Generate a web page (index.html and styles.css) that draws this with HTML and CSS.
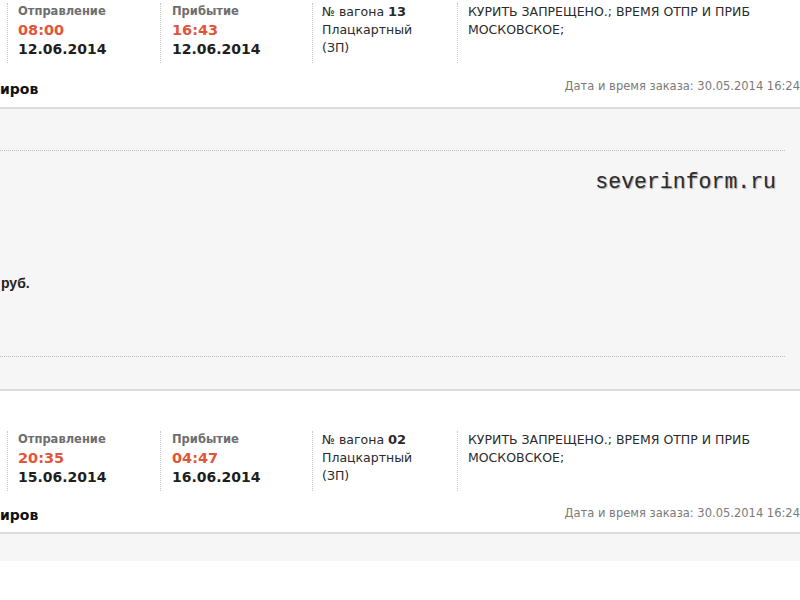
FILE: index.html
```html
<!DOCTYPE html>
<html lang="ru">
<head>
<meta charset="utf-8">
<title>Заказ</title>
<link rel="stylesheet" href="styles.css">
</head>
<body>
<div class="page">
  <section class="order order-first">
    <div class="trip">
      <div class="col col-dep">
        <div class="label">Отправление</div>
        <div class="time">08:00</div>
        <div class="date">12.06.2014</div>
      </div>
      <div class="col col-arr">
        <div class="label">Прибытие</div>
        <div class="time">16:43</div>
        <div class="date">12.06.2014</div>
      </div>
      <div class="col col-car">
        <div class="line">№ вагона <b>13</b></div>
        <div class="line">Плацкартный</div>
        <div class="line">(ЗП)</div>
      </div>
      <div class="col col-note">
        <div class="line">КУРИТЬ ЗАПРЕЩЕНО.; ВРЕМЯ ОТПР И ПРИБ МОСКОВСКОЕ;</div>
      </div>
    </div>
    <div class="pass-head">
      <h3 class="pass-title">иров</h3>
      <div class="order-date">Дата и время заказа: 30.05.2014 16:24</div>
    </div>
    <div class="panel panel-full">
      <div class="panel-rule panel-top"></div>
      <div class="watermark">severinform.ru</div>
      <div class="sum">руб.</div>
      <div class="panel-rule panel-bottom"></div>
    </div>
  </section>

  <section class="order order-second">
    <div class="trip">
      <div class="col col-dep">
        <div class="label">Отправление</div>
        <div class="time">20:35</div>
        <div class="date">15.06.2014</div>
      </div>
      <div class="col col-arr">
        <div class="label">Прибытие</div>
        <div class="time">04:47</div>
        <div class="date">16.06.2014</div>
      </div>
      <div class="col col-car">
        <div class="line">№ вагона <b>02</b></div>
        <div class="line">Плацкартный</div>
        <div class="line">(ЗП)</div>
      </div>
      <div class="col col-note">
        <div class="line">КУРИТЬ ЗАПРЕЩЕНО.; ВРЕМЯ ОТПР И ПРИБ МОСКОВСКОЕ;</div>
      </div>
    </div>
    <div class="pass-head">
      <h3 class="pass-title">иров</h3>
      <div class="order-date">Дата и время заказа: 30.05.2014 16:24</div>
    </div>
    <div class="panel panel-short"></div>
  </section>
</div>
</body>
</html>
```

FILE: styles.css
```css
html, body {
  margin: 0;
  padding: 0;
  background: #ffffff;
}

body {
  font-family: "DejaVu Sans", Verdana, sans-serif;
  color: #222;
  overflow: hidden;
}

.page {
  width: 800px;
}

.order-first {
  padding-top: 3px;
}

.order-second {
  margin-top: 40px;
}

.trip {
  display: flex;
  height: 60px;
  padding-left: 7px;
}

.col {
  border-left: 1px dotted #c8c8c8;
  box-sizing: border-box;
  height: 60px;
}

.col-dep { width: 153px; padding-left: 10px; }
.col-arr { width: 152px; padding-left: 11px; }
.col-car { width: 145px; padding-left: 9px; }
.col-note { flex: 1; padding-left: 10px; }

.label {
  font-size: 11.5px;
  font-weight: bold;
  color: #6e6e6e;
  line-height: 16px;
}

.time {
  font-size: 14.5px;
  font-weight: bold;
  color: #e2553b;
  line-height: 22px;
}

.date {
  font-size: 14px;
  font-weight: bold;
  color: #1e1e1e;
  line-height: 16px;
}

.line {
  font-size: 12.5px;
  line-height: 18px;
  color: #2a2a2a;
}

.col-car .line { width: 100px; }
.col-car b { font-weight: bold; font-size: 13px; }
.col-note .line { width: 300px; }

.pass-head {
  display: flex;
  justify-content: space-between;
  align-items: center;
  height: 44px;
}

.order-second .pass-head {
  height: 41px;
}

.pass-title {
  margin: 0;
  font-size: 14px;
  font-weight: bold;
  color: #111;
  line-height: 18px;
  margin-top: 8px;
}

.order-second .pass-title {
  margin-top: 6px;
}

.order-date {
  font-size: 11.5px;
  color: #7a7a7a;
  margin-top: 2px;
}

.panel {
  background: #f6f6f6;
  border-top: 2px solid #dcdcdc;
}

.panel-full {
  height: 280px;
  border-bottom: 2px solid #dcdcdc;
  display: flex;
  flex-direction: column;
  align-items: flex-start;
}

.panel-short {
  height: 27px;
}

.panel-rule {
  width: 785px;
  border-bottom: 1px dotted #bdbdbd;
}

.panel-top {
  height: 41px;
}

.watermark {
  align-self: stretch;
  font-family: "Liberation Mono", "Courier New", monospace;
  font-size: 21.5px;
  color: #2b2b2b;
  text-shadow: 1px 1px 1px #aaa;
  text-align: right;
  padding-right: 24px;
  margin-top: 18px;
  line-height: 26px;
}

.sum {
  font-family: "Liberation Sans", Arial, sans-serif;
  font-weight: bold;
  font-size: 14px;
  color: #222;
  margin-top: 79px;
  padding-left: 1px;
  line-height: 18px;
}

.panel-bottom {
  margin-top: 64px;
}
```
